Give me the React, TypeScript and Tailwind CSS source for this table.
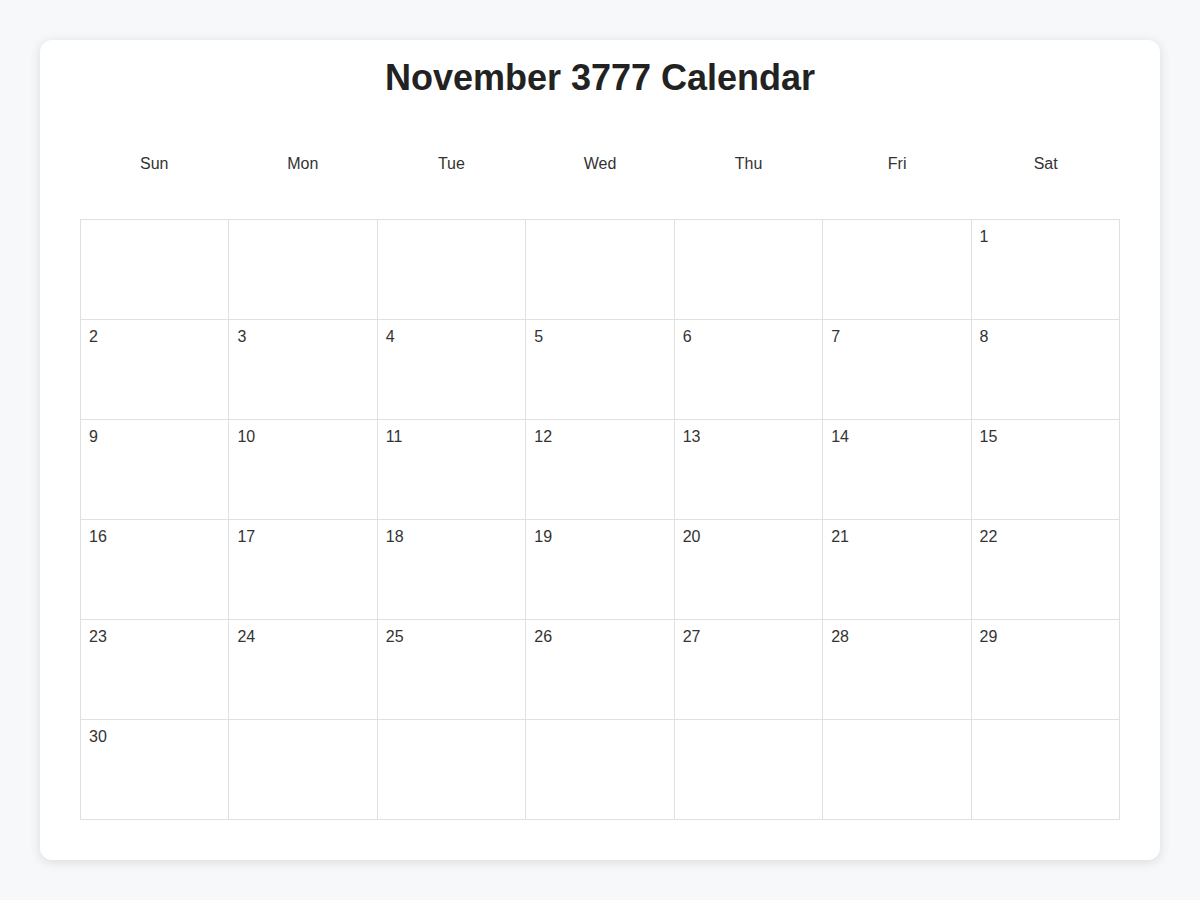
import React from "react";

const days = ["Sun", "Mon", "Tue", "Wed", "Thu", "Fri", "Sat"];

export default function App() {
  const cells: (number | null)[] = [];
  for (let i = 0; i < 6; i++) cells.push(null);
  for (let d = 1; d <= 30; d++) cells.push(d);
  while (cells.length < 42) cells.push(null);

  return (
    <div
      className="min-h-screen w-full bg-[#f7f8fa] px-10 py-10"
      style={{ fontFamily: '"Liberation Sans", Arial, sans-serif' }}
    >
      <div className="h-[820px] rounded-xl bg-white px-10 pt-4 shadow-[0_2px_12px_rgba(0,0,0,0.12)]">
        <h1 className="text-center text-[36px] font-bold leading-[44px] text-[#222]">
          November 3777 Calendar
        </h1>
        <div className="mt-[52px] grid h-[24px] grid-cols-7">
          {days.map((d) => (
            <div key={d} className="text-center text-base leading-[24px] text-[#333]">
              {d}
            </div>
          ))}
        </div>
        <div className="mt-[43px] grid grid-cols-7 border-l border-t border-[#e0e0e0]">
          {cells.map((c, i) => (
            <div
              key={i}
              className="h-[100px] border-b border-r border-[#e0e0e0] pl-2 pt-[8px] text-base leading-[normal] text-[#333]"
            >
              {c ?? ""}
            </div>
          ))}
        </div>
      </div>
    </div>
  );
}
